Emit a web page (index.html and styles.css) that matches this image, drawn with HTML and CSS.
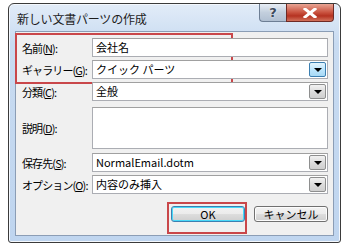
FILE: index.html
```html
<!DOCTYPE html>
<html lang="ja">

<head>
  <meta charset="UTF-8">
  <title>新しい文書パーツの作成</title>
  <link rel="stylesheet" href="styles.css">
</head>

<body>
  <div class="window">
    <div class="titlebar">
      <span class="title">新しい文書パーツの作成</span>
      <div class="caption-btns">
        <span class="cap-btn help">?</span>
        <span class="cap-btn close">
          <svg width="14" height="10" viewBox="0 0 14 10">
            <path d="M2 1 L12 9 M12 1 L2 9" stroke="#fff" stroke-width="3" stroke-linecap="square" />
          </svg>
        </span>
      </div>
    </div>

    <div class="client">
      <div class="mark mark-top"></div>
      <div class="mark mark-ok"></div>

      <div class="row">
        <label>名前(<u>N</u>):</label>
        <div class="field">会社名</div>
      </div>
      <div class="row">
        <label>ギャラリー(<u>G</u>):</label>
        <div class="field combo">クイック パーツ<span class="drop hot"></span></div>
      </div>
      <div class="row">
        <label>分類(<u>C</u>):</label>
        <div class="field combo">全般<span class="drop"></span></div>
      </div>
      <div class="row row-tall">
        <label>説明(<u>D</u>):</label>
        <div class="field area"></div>
      </div>
      <div class="row">
        <label>保存先(<u>S</u>):</label>
        <div class="field combo">NormalEmail.dotm<span class="drop"></span></div>
      </div>
      <div class="row">
        <label>オプション(<u>O</u>):</label>
        <div class="field combo">内容のみ挿入<span class="drop"></span></div>
      </div>

      <div class="buttons">
        <button class="btn default">OK</button>
        <button class="btn">キャンセル</button>
      </div>
    </div>
  </div>
</body>

</html>
```

FILE: styles.css
```css
body {
  margin: 0;
  background: #fff;
  font-family: "Noto Sans CJK JP", "Noto Sans", sans-serif;
  font-size: 11px;
  color: #000;
}

.window {
  margin: 3px 0 0 8px;
  width: 331px;
  height: 238px;
  border: 1px solid #3b3b3b;
  border-radius: 6px 6px 3px 3px;
  background: linear-gradient(#e2ecf8, #c8dbf1 40px, #bfd5ef);
  box-shadow: inset 0 0 0 1px #f4f8fd;
  display: flex;
  flex-direction: column;
}

.titlebar {
  height: 27px;
  display: flex;
  justify-content: space-between;
  align-items: flex-start;
}

.title {
  margin: 7px 0 0 8px;
  font-size: 12px;
  line-height: 15px;
  letter-spacing: -0.2px;
  color: #1e1e1e;
}

.caption-btns {
  display: flex;
  margin-right: 6px;
}

.cap-btn {
  height: 17px;
  border: 1px solid #6d7e94;
  border-top: none;
  display: flex;
  align-items: center;
  justify-content: center;
}

.help {
  width: 26px;
  border-right: none;
  border-radius: 0 0 0 4px;
  background: linear-gradient(#e8eef6, #c3cfdd 50%, #b1c0d2);
  color: #3e4b5c;
  font-family: "DejaVu Sans", sans-serif;
  font-weight: bold;
  font-size: 13px;
  text-shadow: 0 0 2px #fff;
}

.close {
  width: 46px;
  border-color: #6e2a25;
  border-radius: 0 0 4px 0;
  background: linear-gradient(#e9a594, #c9523f 50%, #b53221 70%, #d2715b);
}

.client {
  position: relative;
  margin: 0 6px 6px 6px;
  flex: 1;
  background: #f0f0f0;
  border: 1px solid #8b9db5;
  padding: 6px 5px 0 6px;
}

.row {
  display: flex;
  align-items: center;
  height: 19px;
  margin-bottom: 3px;
}

.row-tall {
  height: 42px;
  margin: 6px 0 4px;
}

.row label {
  width: 70px;
  white-space: nowrap;
  letter-spacing: -0.9px;
}

.row label u {
  text-underline-offset: 1px;
}

.field {
  position: relative;
  flex: 1;
  height: 17px;
  line-height: 17px;
  border: 1px solid #abadb3;
  border-top-color: #a0a0a0;
  background: #fff;
  padding-left: 3px;
  white-space: nowrap;
  overflow: hidden;
}

.area {
  height: 40px;
}

.drop {
  position: absolute;
  right: 1px;
  top: 1px;
  width: 15px;
  height: 13px;
  border: 1px solid #8e8f8f;
  border-radius: 2px;
  background: linear-gradient(#f2f2f2, #dcdcdc 50%, #cfcfcf);
}

.drop::after {
  content: "";
  position: absolute;
  left: 4px;
  top: 5px;
  border-left: 4px solid transparent;
  border-right: 4px solid transparent;
  border-top: 4px solid #000;
}

.drop.hot {
  border-color: #3c7fb1;
  background: linear-gradient(#e3f4fc, #bee6fd 50%, #a7d9f5);
}

.buttons {
  display: flex;
  justify-content: flex-end;
  gap: 9px;
  margin-top: 12px;
}

.btn {
  width: 74px;
  height: 16px;
  padding: 0;
  font-family: inherit;
  font-size: 11px;
  font-weight: normal;
  line-height: 13px;
  border: 1px solid #707070;
  border-radius: 3px;
  background: linear-gradient(#f2f2f2, #ebebeb 50%, #dddddd 51%, #cfcfcf);
  box-shadow: inset 0 0 0 1px #fcfcfc;
  color: #000;
}

.btn.default {
  border-color: #3c7fb1;
  box-shadow: inset 0 0 0 1px #48d8f8;
}

.mark {
  position: absolute;
  border: 2px solid #c9474a;
  pointer-events: none;
}

.mark-top {
  left: -1px;
  top: 1px;
  width: 214px;
  height: 47px;
}

.mark-ok {
  left: 151px;
  top: 170px;
  width: 76px;
  height: 28px;
}
```
